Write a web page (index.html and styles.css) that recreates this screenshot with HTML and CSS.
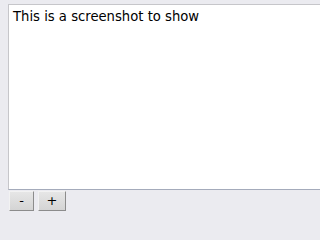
FILE: index.html
```html
<!DOCTYPE html>
<html>
<head>
<meta charset="utf-8">
<link rel="stylesheet" href="styles.css">
</head>
<body>
<div class="panel">
  <textarea class="editor" spellcheck="false">This is a screenshot to show</textarea>
  <div class="controls">
    <button class="btn btn-minus">-</button>
    <button class="btn btn-plus">+</button>
  </div>
</div>
</body>
</html>
```
FILE: styles.css
```css
html, body {
  margin: 0;
  padding: 0;
  background: #ebebf0;
  overflow: hidden;
}
.panel {
  box-sizing: border-box;
  width: 100%;
  display: flex;
  flex-direction: column;
  padding: 4px 0 0 8px;
  gap: 1px;
}
.editor {
  box-sizing: border-box;
  width: 100%;
  height: 186px;
  margin: 0;
  padding: 4px 4px;
  border: 1px solid #c6c6ca;
  border-right: none;
  border-bottom-color: #a4abbb;
  background: #ffffff;
  color: #000000;
  font-family: "DejaVu Sans", Verdana, sans-serif;
  font-size: 13.2px;
  line-height: 15px;
  white-space: pre;
  resize: none;
  outline: none;
  overflow: hidden;
}
.controls {
  display: flex;
  gap: 4px;
  padding-left: 1px;
}
.btn {
  box-sizing: border-box;
  height: 20px;
  margin: 0;
  padding: 0;
  border: 1px solid #f2f2f2;
  border-right-color: #8c8c8c;
  border-bottom-color: #8c8c8c;
  background: linear-gradient(#e6e6e6, #d4d4d4);
  color: #000000;
  font-family: "DejaVu Sans", Verdana, sans-serif;
  font-size: 13px;
  line-height: 16px;
}
.btn-minus { width: 25px; }
.btn-plus { width: 28px; }
```
